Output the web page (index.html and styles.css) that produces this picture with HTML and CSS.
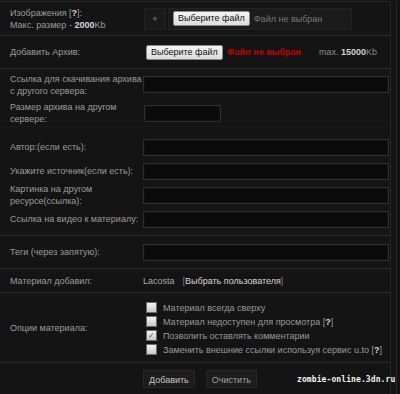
FILE: index.html
```html
<!DOCTYPE html>
<html lang="ru">
    <head>
        <meta charset="UTF-8">
        <meta name="viewport" content="width=device-width, initial-scale=1.0">
        <title>Добавить материал</title>
        <link rel="stylesheet" href="styles.css">
    </head>
    <body>
        <div class="panel">
            <div class="form">
                <div class="row r-img">
                    <div class="label">Изображения [<b>?</b>]:<br>Макс. размер - <b>2000</b>Kb</div>
                    <div class="field">
                        <span class="plus">+</span>
                        <span class="filebox">
                            <span class="filebtn">Выберите файл</span>
                            <span class="nofile">Файл не выбран</span>
                        </span>
                    </div>
                </div>
                <div class="row r-arc">
                    <div class="label">Добавить Архив:</div>
                    <div class="field">
                        <span class="filebtn">Выберите файл</span>
                        <span class="nofile red">Файл не выбран</span>
                        <span class="max">max. <b>15000</b>Kb</span>
                    </div>
                </div>
                <div class="group g-remote">
                    <div class="row r-link">
                        <div class="label">Ссылка для скачивания архива<br>с другого сервера:</div>
                        <div class="field"><input class="inp" type="text"></div>
                    </div>
                    <div class="row r-size">
                        <div class="label">Размер архива на другом<br>сервере:</div>
                        <div class="field"><input class="inp short" type="text"></div>
                    </div>
                </div>
                <div class="group g-meta">
                    <div class="row r-meta">
                        <div class="label">Автор:(если есть):</div>
                        <div class="field"><input class="inp" type="text"></div>
                    </div>
                    <div class="row r-meta">
                        <div class="label">Укажите источник(если есть):</div>
                        <div class="field"><input class="inp" type="text"></div>
                    </div>
                    <div class="row r-meta">
                        <div class="label">Картинка на другом<br>ресурсе(ссылка):</div>
                        <div class="field"><input class="inp" type="text"></div>
                    </div>
                    <div class="row r-meta">
                        <div class="label">Ссылка на видео к материалу:</div>
                        <div class="field"><input class="inp" type="text"></div>
                    </div>
                </div>
                <div class="row r-tags">
                    <div class="label">Теги (через запятую):</div>
                    <div class="field"><input class="inp" type="text"></div>
                </div>
                <div class="row r-user">
                    <div class="label">Материал добавил:</div>
                    <div class="field"><span class="user">Lacosta</span> <span class="pick">[<a href="#">Выбрать пользователя</a>]</span></div>
                </div>
                <div class="row r-opts">
                    <div class="label">Опции материала:</div>
                    <div class="field opts">
                        <label class="opt"><span class="cb"></span>Материал всегда сверху</label>
                        <label class="opt"><span class="cb"></span>Материал недоступен для просмотра [<b>?</b>]</label>
                        <label class="opt"><span class="cb on">&#10003;</span>Позволить оставлять комментарии</label>
                        <label class="opt"><span class="cb"></span>Заменить внешние ссылки используя сервис u.to [<b>?</b>]</label>
                    </div>
                </div>
                <div class="row r-btns">
                    <div class="label"></div>
                    <div class="field">
                        <span class="btn main">Добавить</span>
                        <span class="btn">Очистить</span>
                    </div>
                </div>
            </div>
        </div>
        <div class="watermark">zombie-online.3dn.ru</div>
    </body>
</html>
```

FILE: styles.css
```css
html, body {
    margin: 0;
    padding: 0;
    background-color: #141414;
}

body {
    width: 400px;
    height: 394px;
    overflow: hidden;
    position: relative;
    font-family: "Liberation Sans", Arial, sans-serif;
    font-size: 9px;
    color: #9c9c9c;
}

.panel {
    width: 396px;
    border-right: 1px solid #262626;
    margin-top: 1px;
}

.form {
    width: 390px;
    border-top: 1px solid #2a2a2a;
    border-right: 1px solid #262626;
}

.row {
    display: flex;
    align-items: center;
    border-bottom: 1px solid #2a2a2a;
}

.group .row {
    border-bottom: none;
}

.label {
    width: 133px;
    padding-left: 10px;
    line-height: 12px;
    flex-shrink: 0;
    white-space: nowrap;
}

.label b {
    color: #d8d8d8;
}

.field {
    flex: 1;
    display: flex;
    align-items: center;
    white-space: nowrap;
}

.r-img { height: 33px; }
.r-arc { height: 32px; }
.g-remote { border-bottom: 1px solid #191919; }
.r-link { height: 31px; }
.r-size { height: 26px; }
.g-meta { padding: 8px 0 4px; border-bottom: 1px solid #2a2a2a; }
.r-meta { height: 24px; }
.r-tags { height: 32px; }
.r-user { height: 23px; }
.r-opts { height: 69px; }
.r-btns { height: 31px; border-bottom: none; }

.plus {
    width: 20px;
    height: 20px;
    margin-left: 1px;
    background-color: #1a1a1a;
    border: 1px solid #222;
    color: #888;
    font-size: 9px;
    display: flex;
    align-items: center;
    justify-content: center;
    flex-shrink: 0;
}

.filebox {
    display: flex;
    align-items: center;
    width: 178px;
    height: 20px;
    margin-left: 2px;
    padding-left: 4px;
    background-color: #1b1b1b;
    border: 1px solid #222;
}

.filebtn {
    display: inline-block;
    flex-shrink: 0;
    height: 13px;
    line-height: 13px;
    padding: 0 4px;
    background: linear-gradient(#f4f4f4, #dcdcdc);
    border: 1px solid #8a8a8a;
    border-radius: 2px;
    color: #111;
    font-size: 9px;
}

.r-arc .filebtn {
    margin-left: 3px;
}

.nofile {
    margin-left: 4px;
    color: #777;
}

.nofile.red {
    color: #c00000;
    font-weight: bold;
}

.max {
    margin-left: auto;
    margin-right: 13px;
    color: #8a8a8a;
}

.max b {
    color: #cfcfcf;
}

.inp {
    width: 246px;
    height: 17px;
    box-sizing: border-box;
    background-color: #0b0b0b;
    border: 1px solid #2e2e2e;
    box-shadow: inset 0 0 0 1px #121212;
    padding: 0;
    margin: 0;
    outline: none;
}

.inp.short {
    width: 77px;
    margin-left: 1px;
}

.user {
    color: #a8a8a8;
    margin-right: 8px;
}

.pick {
    color: #777;
}

.pick a {
    color: #d6d6d6;
    text-decoration: none;
}

.opts {
    flex-direction: column;
    align-items: flex-start;
    padding-top: 2px;
}

.opt {
    display: flex;
    align-items: center;
    height: 14px;
    color: #9a9a9a;
}

.opt b {
    color: #d8d8d8;
}

.cb {
    width: 9px;
    height: 9px;
    margin: 0 6px 0 3px;
    background: linear-gradient(#f4f4f4, #c8c8c8);
    border: 1px solid #6a6a6a;
    color: #4a5a8a;
    font-size: 8px;
    line-height: 9px;
    text-align: center;
}

.btn {
    display: inline-block;
    height: 18px;
    line-height: 18px;
    box-sizing: border-box;
    padding: 0 5px;
    margin-right: 11px;
    background-color: #1c1c1c;
    border: 1px solid #262626;
    color: #a0a0a0;
}

.btn.main {
    color: #c8c8c8;
}

.watermark {
    position: absolute;
    left: 297px;
    top: 375px;
    font-family: "DejaVu Sans Mono", monospace;
    font-weight: bold;
    font-size: 8px;
    color: #f2f2f2;
    letter-spacing: 0.1px;
}
```
